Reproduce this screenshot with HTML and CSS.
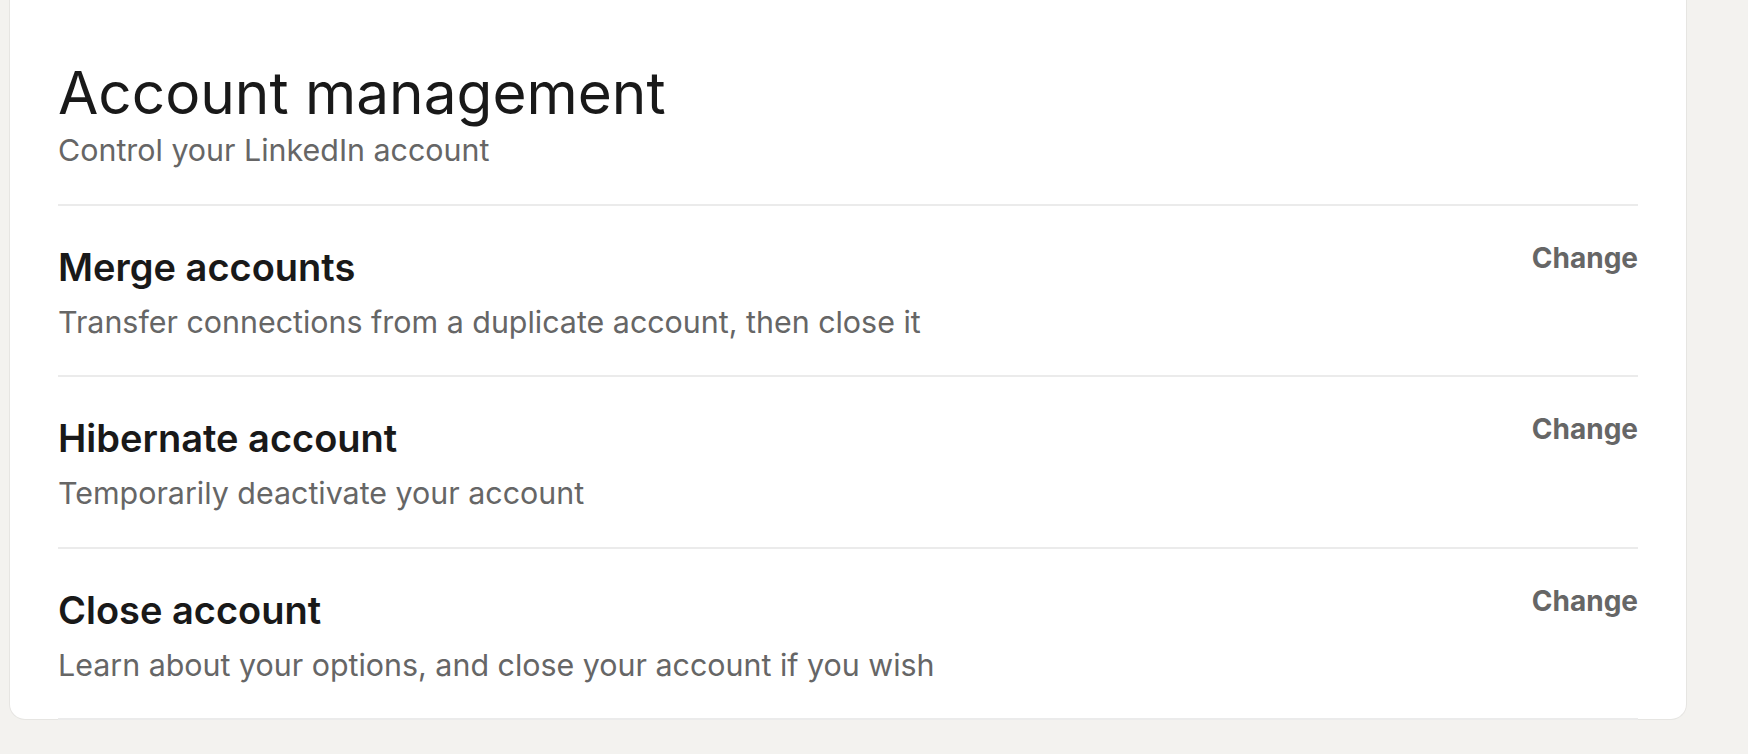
FILE: index.html
```html
<!DOCTYPE html>
<html lang="en">
<head>
<meta charset="utf-8">
<title>Account management</title>
<link rel="stylesheet" href="styles.css">
</head>
<body>
<main class="page">
  <section class="card">
    <header class="card-header">
      <h1 class="title">Account management</h1>
      <p class="subtitle">Control your LinkedIn account</p>
    </header>
    <ul class="settings">
      <li class="row">
        <div class="row-text">
          <h2 class="row-title">Merge accounts</h2>
          <p class="row-desc">Transfer connections from a duplicate account, then close it</p>
        </div>
        <a class="row-action" href="#">Change</a>
      </li>
      <li class="row">
        <div class="row-text">
          <h2 class="row-title">Hibernate account</h2>
          <p class="row-desc">Temporarily deactivate your account</p>
        </div>
        <a class="row-action" href="#">Change</a>
      </li>
      <li class="row">
        <div class="row-text">
          <h2 class="row-title">Close account</h2>
          <p class="row-desc">Learn about your options, and close your account if you wish</p>
        </div>
        <a class="row-action" href="#">Change</a>
      </li>
    </ul>
  </section>
</main>
</body>
</html>
```
FILE: styles.css
```css
* {
  box-sizing: border-box;
}

html, body {
  margin: 0;
  padding: 0;
}

body {
  background: #f3f2ef;
  font-family: Inter, "Liberation Sans", Arial, sans-serif;
  color: #191919;
}

.page {
  padding-left: 9px;
}

.card {
  width: 1678px;
  background: #ffffff;
  border: 1px solid #e6e5e2;
  border-top: none;
  border-radius: 0 0 16px 16px;
  padding: 58px 48px 0 48px;
}

.card-header {
  padding-bottom: 34px;
  border-bottom: 2px solid #ebebeb;
}

.title {
  margin: 0;
  font-size: 58.5px;
  line-height: 70px;
  font-weight: 400;
  color: #191919;
}

.subtitle {
  margin: 2px 0 0 0;
  font-size: 30.4px;
  line-height: 40px;
  color: #666666;
}

.settings {
  list-style: none;
  margin: 0;
  padding: 0;
}

.row {
  display: flex;
  justify-content: space-between;
  align-items: flex-start;
  padding: 37px 0 33.3px 0;
  border-bottom: 2px solid #ebebeb;
}

.row:last-child {
  margin-bottom: -1px;
}

.row-title {
  margin: 0;
  font-size: 38px;
  line-height: 48px;
  font-weight: 600;
  color: #191919;
}

.row-desc {
  margin: 11px 0 0 0;
  font-size: 30.4px;
  line-height: 40px;
  color: #666666;
}

.row-action {
  font-size: 28px;
  line-height: 30px;
  font-weight: 700;
  color: #666666;
  text-decoration: none;
}
```
